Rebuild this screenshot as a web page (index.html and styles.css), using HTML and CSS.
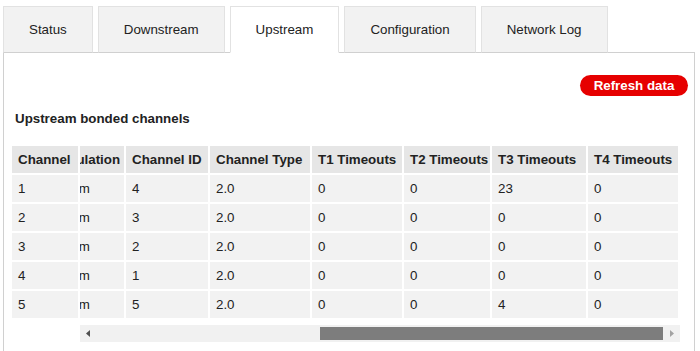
FILE: index.html
```html
<!DOCTYPE html>
<html lang="en">
<head>
    <meta charset="UTF-8">
    <meta name="viewport" content="width=device-width, initial-scale=1.0">
    <title>Upstream</title>
    <link rel="stylesheet" href="styles.css">
</head>
<body>
    <div class="tabs">
        <div class="tab">Status</div>
        <div class="tab">Downstream</div>
        <div class="tab active">Upstream</div>
        <div class="tab">Configuration</div>
        <div class="tab">Network Log</div>
    </div>
    <div class="panel">
        <div class="toolbar">
            <button class="refresh">Refresh data</button>
        </div>
        <h3 class="section-title">Upstream bonded channels</h3>
        <div class="channels">
            <table class="grid frozen">
                <tr><th>Channel</th></tr>
                <tr><td>1</td></tr>
                <tr><td>2</td></tr>
                <tr><td>3</td></tr>
                <tr><td>4</td></tr>
                <tr><td>5</td></tr>
            </table>
            <div class="scroll-area">
                <div class="viewport">
                    <table class="grid scrolled">
                        <tr>
                            <th>Modulation</th>
                            <th>Channel ID</th>
                            <th>Channel Type</th>
                            <th>T1 Timeouts</th>
                            <th>T2 Timeouts</th>
                            <th>T3 Timeouts</th>
                            <th>T4 Timeouts</th>
                        </tr>
                        <tr><td>64qam</td><td>4</td><td>2.0</td><td>0</td><td>0</td><td>23</td><td>0</td></tr>
                        <tr><td>64qam</td><td>3</td><td>2.0</td><td>0</td><td>0</td><td>0</td><td>0</td></tr>
                        <tr><td>64qam</td><td>2</td><td>2.0</td><td>0</td><td>0</td><td>0</td><td>0</td></tr>
                        <tr><td>64qam</td><td>1</td><td>2.0</td><td>0</td><td>0</td><td>0</td><td>0</td></tr>
                        <tr><td>64qam</td><td>5</td><td>2.0</td><td>0</td><td>0</td><td>4</td><td>0</td></tr>
                    </table>
                </div>
                <div class="hscroll">
                    <div class="hscroll-btn">
                        <svg width="17" height="17" viewBox="0 0 17 17"><path d="M10 5 L6 8.5 L10 12 Z" fill="#505050"/></svg>
                    </div>
                    <div class="hscroll-track">
                        <div class="hscroll-thumb"></div>
                    </div>
                    <div class="hscroll-btn">
                        <svg width="17" height="17" viewBox="0 0 17 17"><path d="M7 5 L11 8.5 L7 12 Z" fill="#a3a3a3"/></svg>
                    </div>
                </div>
            </div>
        </div>
    </div>
</body>
</html>
```

FILE: styles.css
```css
body {
    font-family: "Liberation Sans", Arial, sans-serif;
    font-size: 10pt;
    color: #222;
    margin: 0;
    padding: 6px 0 0 3px;
    background-color: #fff;
}

.tabs {
    display: flex;
    gap: 5px;
    margin-bottom: -1px;
}

.tab {
    position: relative;
    z-index: 1;
    height: 45px;
    padding: 0 25px;
    display: flex;
    align-items: center;
    background-color: #f2f2f2;
    border: 1px solid #e2e2e2;
    border-bottom-color: #d0d0d0;
    color: #222;
}

.tab.active {
    background-color: #fff;
    border-bottom-color: #fff;
}

.panel {
    width: 690px;
    height: 320px;
    border: 1px solid #d0d0d0;
    background: #fff;
}

.toolbar {
    display: flex;
    justify-content: flex-end;
    padding: 22px 6px 0 0;
}

.refresh {
    height: 21px;
    width: 108px;
    padding: 0;
    border: none;
    border-radius: 11px;
    background-color: #e60000;
    color: #fff;
    font-family: inherit;
    font-size: 10pt;
    font-weight: bold;
    cursor: pointer;
}

.section-title {
    margin: 15px 0 17px;
    padding-left: 11px;
    font-size: 10pt;
    line-height: 16px;
    font-weight: bold;
}

.channels {
    display: flex;
    align-items: flex-start;
    margin-left: 6px;
}

.grid {
    border-collapse: separate;
    border-spacing: 2px;
    table-layout: fixed;
}

.grid th,
.grid td {
    box-sizing: border-box;
    height: 27px;
    padding: 0 6px;
    text-align: left;
    white-space: nowrap;
    overflow: hidden;
}

.grid th {
    background-color: #e6e6e6;
    font-weight: bold;
}

.grid td {
    background-color: #f2f2f2;
}

.frozen {
    width: 70px;
}

.frozen th,
.frozen td {
    width: 66px;
}

.viewport {
    width: 600px;
    overflow: hidden;
}

/* scrolled to the far right, modulation column partly hidden */
.scrolled {
    width: 639px;
    margin-left: -39px;
}

.scrolled th:nth-child(1) { width: 81px; }
.scrolled th:nth-child(2) { width: 82px; }
.scrolled th:nth-child(3) { width: 100px; }
.scrolled th:nth-child(4) { width: 90px; }
.scrolled th:nth-child(5) { width: 86px; }
.scrolled th:nth-child(6) { width: 94px; }
.scrolled th:nth-child(7) { width: 90px; }

.hscroll {
    display: flex;
    width: 600px;
    height: 17px;
    margin-top: 5px;
    background-color: #f1f1f1;
}

.hscroll-btn {
    width: 17px;
    height: 17px;
}

.hscroll-btn svg {
    display: block;
}

.hscroll-track {
    flex: 1;
    display: flex;
    justify-content: flex-end;
    align-items: center;
}

.hscroll-thumb {
    width: 343px;
    height: 13px;
    background-color: #7d7d7d;
}
```
